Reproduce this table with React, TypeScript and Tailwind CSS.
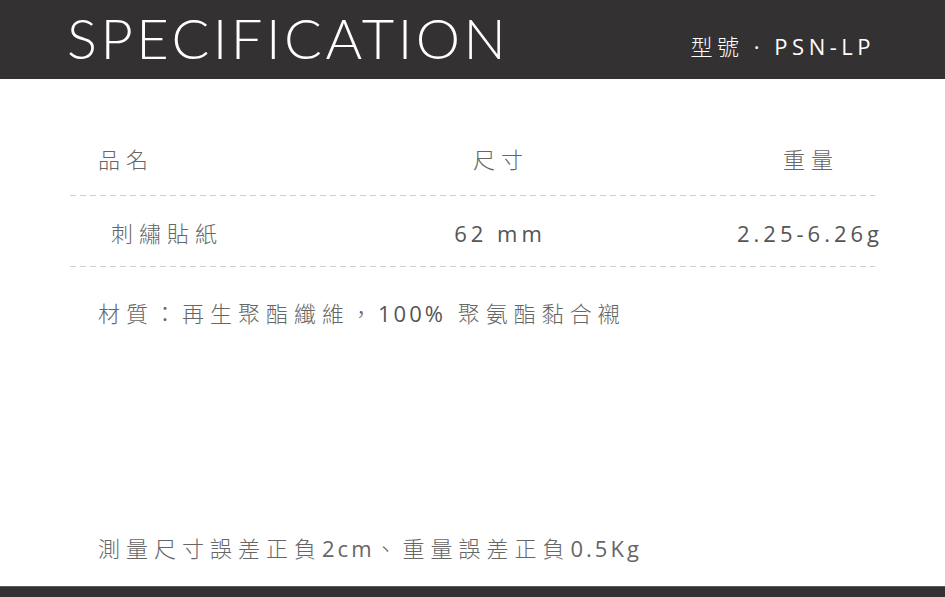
const cjk = "font-['Open_Sans','Noto_Sans_CJK_TC',sans-serif]";

const Dashed = () => (
    <div className="h-px w-[805px] bg-[repeating-linear-gradient(to_right,#cfcfcf_0_6px,transparent_6px_10px)]" />
);

export default function App() {
    return (
        <div className={`flex h-[597px] w-[945px] flex-col overflow-hidden bg-white ${cjk}`}>
            <header className="flex h-[79px] shrink-0 items-center justify-between bg-[#333132] pl-[67px] pr-[70px]">
                <h1 className="mt-[-4px] font-['Lato',sans-serif] text-[56px] font-light leading-none tracking-[3.5px] text-white">
                    SPECIFICATION
                </h1>
                <div className="mt-[12px] text-[22px] leading-none tracking-[4.5px] text-white">
                    <span className="font-light">型號</span> · PSN-LP
                </div>
            </header>

            <main className="flex flex-1 flex-col pl-[70px] pt-[45px] font-light">
                <div className="flex h-[71px] items-center text-[22px] tracking-[6px] text-[#666]">
                    <div className="w-[308px] pl-[28px]">品名</div>
                    <div className="w-[240px] pl-[6px] text-center">尺寸</div>
                    <div className="ml-[95px] w-[190px] pl-[6px] text-center">重量</div>
                </div>
                <Dashed />
                <div className="flex h-[70px] items-center pt-[4px] text-[22px] text-[#555]">
                    <div className="w-[308px] pl-[41px] tracking-[6px] text-[#666]">刺繡貼紙</div>
                    <div className="w-[240px] pl-[4px] text-center font-normal tracking-[4px]">62 mm</div>
                    <div className="ml-[95px] w-[190px] pl-[4px] text-center font-normal tracking-[4px]">2.25-6.26g</div>
                </div>
                <Dashed />
                <p className="mt-[31px] pl-[28px] text-[22px] leading-[30px] tracking-[6px] text-[#666]">
                    材質：再生聚酯纖維，<span className="font-normal tracking-[3px] text-[#555]">100%</span> 聚氨酯黏合襯
                </p>
                <p className="mt-auto mb-[23px] pl-[28px] text-[22px] leading-[30px] tracking-[6px] text-[#666]">
                    測量尺寸誤差正負<span className="font-normal tracking-[3px]">2cm</span>、重量誤差正負<span className="font-normal tracking-[3px]">0.5Kg</span>
                </p>
            </main>

            <footer className="h-[11px] shrink-0 border-t border-[#5a5a5a] bg-[#333132]" />
        </div>
    );
}
